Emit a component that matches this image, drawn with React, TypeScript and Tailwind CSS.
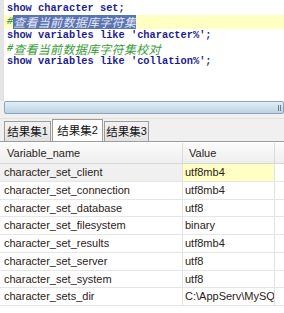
const rows: [string, string][] = [
  ['character_set_client', 'utf8mb4'],
  ['character_set_connection', 'utf8mb4'],
  ['character_set_database', 'utf8'],
  ['character_set_filesystem', 'binary'],
  ['character_set_results', 'utf8mb4'],
  ['character_set_server', 'utf8'],
  ['character_set_system', 'utf8'],
  ['character_sets_dir', 'C:\\AppServ\\MySQL'],
];

const mono = "font-['Liberation_Mono',monospace] font-bold text-[10.33px] text-[#1c1c92]";
const cjk = "inline-block h-[13.33px] leading-[13.33px] font-['Noto_Sans_CJK_SC',sans-serif] text-[12px] italic font-normal";

const Editor = () => {
  return (
    <div className="flex h-[101px] bg-white">
      <div className="w-[4px] bg-[#e4e4e4]" />
      <div className={`flex-1 pt-[2px] ${mono}`}>
        <div className="h-[13.33px] leading-[13.33px] pl-[3px] whitespace-pre">show character set;</div>
        <div className="h-[13.33px] leading-[13.33px] pl-[3px] whitespace-pre bg-[#ffffc4] flex items-center">
          <span className="text-[#3c9c3c] italic">#</span>
          <span className={`${cjk} bg-[#5a74b2] text-[#e4e8f6] tracking-[0.3px]`}>查看当前数据库字符集</span>
        </div>
        <div className="h-[13.33px] leading-[13.33px] pl-[3px] whitespace-pre">show variables like 'character%';</div>
        <div className="h-[13.33px] leading-[13.33px] pl-[3px] whitespace-pre flex items-center text-[#3c9c3c]">
          <span className="italic">#</span>
          <span className={`${cjk} tracking-[0.3px]`}>查看当前数据库字符集校对</span>
        </div>
        <div className="h-[13.33px] leading-[13.33px] pl-[3px] whitespace-pre">show variables like 'collation%';</div>
      </div>
    </div>
  );
};

const Tab = ({ label, n, active, w }: { label: string; n: string; active?: boolean; w: string }) => {
  return (
    <div
      className={`${w} flex items-center justify-center border border-[#9c9c9c] border-b-0 font-['Noto_Sans_CJK_SC',sans-serif] text-[11.5px] text-[#111] ${
        active ? 'h-[22px] bg-white' : 'h-[20px] bg-gradient-to-b from-[#f2f2f2] to-[#e2e2e2]'
      }`}
    >
      {label}
      <span className="font-['Liberation_Sans',sans-serif] text-[11px]">{n}</span>
    </div>
  );
};

export default function App() {
  return (
    <div className="w-[284px] h-[313px] overflow-hidden bg-[#f0f0f0] flex flex-col">
      <Editor />
      <div className="h-[13px] pl-[4px] bg-[#f0f0f0]">
        <div className="h-full border border-[#8ea4b8] rounded-[2px] bg-gradient-to-b from-[#e2edf5] to-[#bcd3e4] flex justify-end items-center pr-[2px] gap-[1px]">
          <div className="w-[1px] h-[6px] bg-[#6a8093]" />
          <div className="w-[1px] h-[6px] bg-[#6a8093]" />
        </div>
      </div>
      <div className="h-[5px] border-b border-[#e2e2e2]" />
      <div className="flex items-end pl-[4px] gap-[1px] h-[23px] border-b border-[#9c9c9c]">
        <Tab label="结果集" n="1" w="w-[47px]" />
        <Tab label="结果集" n="2" w="w-[51px]" active />
        <Tab label="结果集" n="3" w="w-[45px]" />
      </div>
      <div className="flex-1 bg-white font-['Liberation_Sans',sans-serif] text-[11px] text-[#2a2218]">
        <div className="flex h-[21px] bg-gradient-to-b from-[#fbfbfb] to-[#eeeeee] border-b border-[#d6d6d6] mt-[1px]">
          <div className="w-[183px] pl-[7px] flex items-center border-r border-[#dadada]">Variable_name</div>
          <div className="w-[92px] pl-[6px] flex items-center border-r border-[#dadada]">Value</div>
          <div className="flex-1" />
        </div>
        {rows.map(([name, value], i) => (
          <div key={name} className="flex h-[17.75px] border-b border-[#e6e6e6]">
            <div className={`w-[183px] pl-[4px] flex items-center border-r border-[#e2e2e2] ${i === 0 ? 'bg-[#f0f0f0]' : ''}`}>
              {name}
            </div>
            <div className={`w-[92px] pl-[2px] flex items-center border-r border-[#e2e2e2] overflow-hidden whitespace-nowrap ${i === 0 ? 'bg-[#ffffc4]' : ''}`}>
              {value}
            </div>
            <div className="flex-1" />
          </div>
        ))}
      </div>
    </div>
  );
}
